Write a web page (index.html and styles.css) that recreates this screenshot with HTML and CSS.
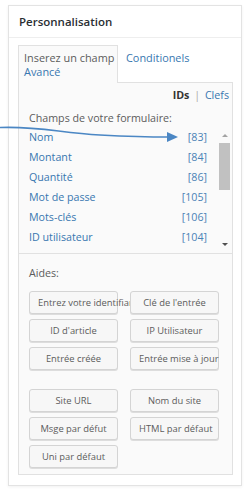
FILE: index.html
```html
<!doctype html>
<html>
<head>
<title>Personnalisation</title>
<meta content="width=252" name="viewport">
<link rel="stylesheet" href="styles.css">
</head>
<body>

<div class="postbox">
  <h2 class="hndle">Personnalisation</h2>
  <div class="inside">
    <div class="tabs">
      <span class="tab active">Inserez un champ</span>
      <a class="tab cond" href="#">Conditionels</a>
      <a class="tab adv" href="#">Avancé</a>
    </div>

    <div class="tab-panel">
      <div class="toggle"><b>IDs</b> <span class="sep">|</span> <a href="#">Clefs</a></div>
      <div class="label">Champs de votre formulaire:</div>

      <div class="fields">
        <ul class="rows">
          <li><a href="#">Nom</a><span class="num">[83]</span></li>
          <li><a href="#">Montant</a><span class="num">[84]</span></li>
          <li><a href="#">Quantité</a><span class="num">[86]</span></li>
          <li><a href="#">Mot de passe</a><span class="num">[105]</span></li>
          <li><a href="#">Mots-clés</a><span class="num">[106]</span></li>
          <li><a href="#">ID utilisateur</a><span class="num">[104]</span></li>
          <li><a href="#">Email</a><span class="num">[94]</span></li>
        </ul>
        <div class="scrollbar">
          <div class="sb-up"><i></i></div>
          <div class="sb-thumb"></div>
          <div class="sb-fill"></div>
          <div class="sb-down"><i></i></div>
        </div>
      </div>

      <div class="label aides">Aides:</div>

      <div class="helpers">
        <button>Entrez votre identifiant</button>
        <button>Clé de l'entrée</button>
        <button>ID d'article</button>
        <button>IP Utilisateur</button>
        <button>Entrée créée</button>
        <button>Entrée mise à jour</button>
      </div>
      <div class="helpers second">
        <button>Site URL</button>
        <button>Nom du site</button>
        <button>Msge par défut</button>
        <button>HTML par défaut</button>
        <button>Uni par défaut</button>
      </div>
    </div>
  </div>
</div>

<svg class="pointer" width="190" height="150" viewBox="0 0 190 150">
  <path d="M0 127.5 C40 126 60 133 100 135 S150 137 168 137" fill="none" stroke="#4b87c4" stroke-width="1.6"/>
  <polygon points="167,132 178,137 167,142" fill="#4b87c4"/>
</svg>

</body>
</html>
```

FILE: styles.css
```css
body {
	margin: 0;
	background: #fff;
	font-family: "Open Sans", sans-serif;
	font-size: 10.7px;
	color: #5c5c5c;
}

a {
	color: #3877b0;
	text-decoration: none;
}

.postbox {
	margin: 5px 10px 11px 8px;
	border: 1px solid #e3e3e3;
	box-shadow: 0 1px 3px rgba(0,0,0,.06);
	background: #fff;
}

.hndle {
	margin: 0;
	padding: 0 10px;
	height: 31px;
	line-height: 31px;
	font-size: 11.5px;
	font-weight: 600;
	color: #2a2e33;
	border-bottom: 1px solid #eee;
}

.inside {
	padding: 7px 8px 10px 9px;
}

/* tab strip: the active tab spans both lines */
.tabs {
	display: grid;
	grid-template-columns: 100px auto;
	grid-template-rows: 14px 23px;
	line-height: 14px;
	font-size: 10.9px;
}
.tab {
	padding-left: 5px;
}
.tab.active {
	grid-row: 1 / 3;
	grid-column: 1;
	padding-top: 5px;
	border: 1px solid #e1e1e1;
	border-bottom: none;
	background: #fafafa;
	color: #5c5c5c;
	margin-bottom: -1px;
	position: relative;
	z-index: 1;
}
.tab.cond {
	grid-row: 1;
	grid-column: 2;
	padding-top: 6px;
	padding-left: 8px;
}
.tab.adv {
	grid-row: 2;
	grid-column: 1;
	padding-top: 6px;
	padding-left: 6px;
	z-index: 2;
}

.tab-panel {
	border: 1px solid #e1e1e1;
	background: #fafafa;
	padding-bottom: 6px;
}

.toggle {
	text-align: right;
	padding: 4px 3px 0;
	line-height: 16px;
}
.toggle b {
	color: #333;
	font-weight: 700;
}
.toggle .sep {
	color: #aaa;
	padding: 0 2px;
}

.label {
	padding-left: 10px;
	margin-top: 7px;
	line-height: 16px;
}

.fields {
	display: flex;
	height: 126px;
	margin-top: 1px;
	padding: 0 2px 0 10px;
	border-bottom: 1px solid #e1e1e1;
	overflow: hidden;
}
.rows {
	flex: 1;
	list-style: none;
	margin: 0;
	padding: 0 12px 0 0;
}
.rows li {
	display: flex;
	justify-content: space-between;
	height: 20px;
	line-height: 20px;
}
.rows .num {
	color: #4a82b6;
}

.scrollbar {
	width: 11px;
	display: flex;
	flex-direction: column;
}
.sb-up, .sb-down {
	display: flex;
	justify-content: center;
	align-items: center;
}
.sb-up {
	height: 16px;
}
.sb-down {
	height: 14px;
	align-items: flex-start;
}
.sb-up i {
	border: 3px solid transparent;
	border-bottom: 3px solid #a3a3a3;
	border-top: none;
}
.sb-down i {
	margin-top: 4px;
	border: 3px solid transparent;
	border-top: 3px solid #505050;
	border-bottom: none;
}
.sb-thumb {
	height: 47px;
	background: #c1c1c1;
}
.sb-fill {
	flex: 1;
}

.aides {
	margin-top: 11px;
}

.helpers {
	display: grid;
	grid-template-columns: 89px 89px;
	column-gap: 12px;
	row-gap: 5px;
	padding-left: 10px;
	margin-top: 10px;
}
.helpers.second {
	margin-top: 19px;
}
.helpers button {
	height: 23px;
	padding: 0 8px;
	border: 1px solid #d4d4d4;
	border-radius: 3px;
	background: #f7f7f7;
	box-shadow: 0 1px 0 #ddd;
	font-family: "Open Sans", sans-serif;
	font-size: 9.4px;
	color: #5c5c5c;
	white-space: nowrap;
	text-align: center;
	overflow: visible;
}

.pointer {
	position: absolute;
	left: 0;
	top: 0;
	pointer-events: none;
}
```
